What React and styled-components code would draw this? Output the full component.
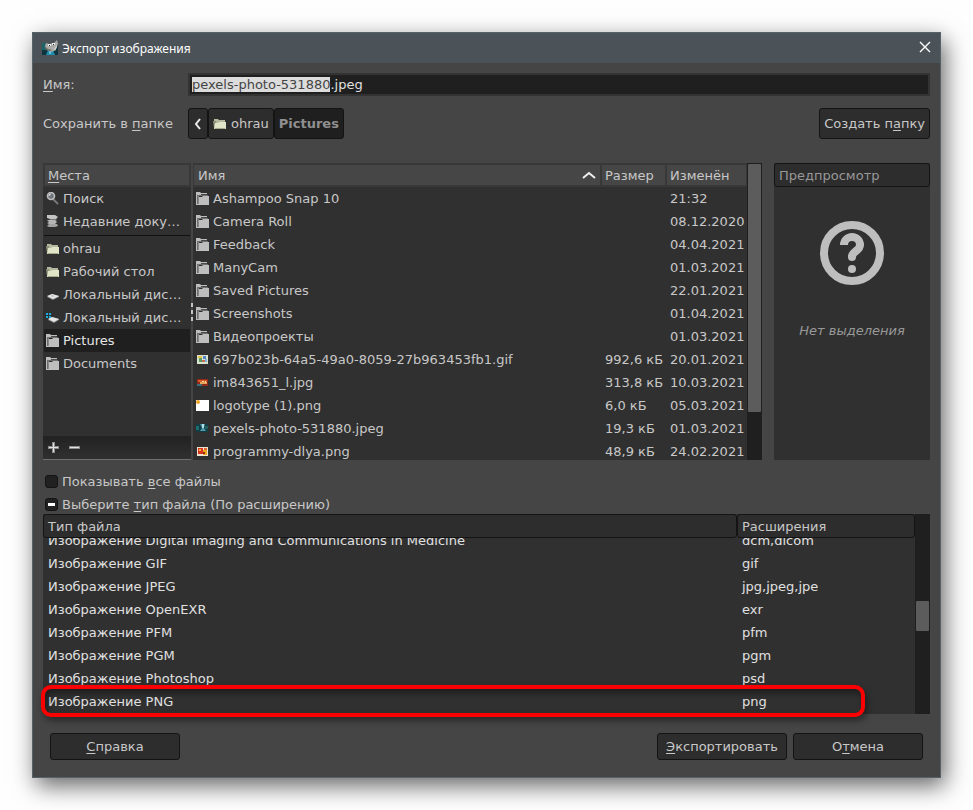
import React, { useEffect, useRef } from "react";
import styled, { createGlobalStyle } from "styled-components";

const places = [
  { icon: "search", name: "Поиск" },
  { icon: "recent", name: "Недавние доку…", line: true },
  { icon: "home", name: "ohrau" },
  { icon: "home", name: "Рабочий стол" },
  { icon: "disk", name: "Локальный дис…" },
  { icon: "system", name: "Локальный дис…" },
  { icon: "folder", name: "Pictures", active: true },
  { icon: "folder", name: "Documents" },
];

const files = [
  { icon: "folder", name: "Ashampoo Snap 10", size: "", date: "21:32" },
  { icon: "folder", name: "Camera Roll", size: "", date: "08.12.2020" },
  { icon: "folder", name: "Feedback", size: "", date: "04.04.2021" },
  { icon: "folder", name: "ManyCam", size: "", date: "01.03.2021" },
  { icon: "folder", name: "Saved Pictures", size: "", date: "22.01.2021" },
  { icon: "folder", name: "Screenshots", size: "", date: "01.04.2021" },
  { icon: "folder", name: "Видеопроекты", size: "", date: "01.03.2021" },
  { icon: "gif", name: "697b023b-64a5-49a0-8059-27b963453fb1.gif", size: "992,6 кБ", date: "20.01.2021" },
  { icon: "jpg", name: "im843651_l.jpg", size: "313,8 кБ", date: "10.03.2021" },
  { icon: "logo", name: "logotype (1).png", size: "6,0 кБ", date: "05.03.2021" },
  { icon: "pexels", name: "pexels-photo-531880.jpeg", size: "19,3 кБ", date: "01.03.2021" },
  { icon: "prog", name: "programmy-dlya.png", size: "48,9 кБ", date: "24.02.2021" },
];

const types = [
  ["Изображение Digital Imaging and Communications in Medicine", "dcm,dicom"],
  ["Изображение GIF", "gif"],
  ["Изображение JPEG", "jpg,jpeg,jpe"],
  ["Изображение OpenEXR", "exr"],
  ["Изображение PFM", "pfm"],
  ["Изображение PGM", "pgm"],
  ["Изображение Photoshop", "psd"],
  ["Изображение PNG", "png"],
];

const drawings = {
  folder: (
    <>
      <path d="M0 0h4l1 1h6v1H5v1H1v10H0z" fill="#bdbdbd" />
      <path d="M0 3h1v10H0z" fill="#bdbdbd" />
      <path d="M1 3h11v1H2v8H1z" fill="#6e6e6e" />
      <path d="M5 2h6v1H5z" fill="#4a4a4a" />
      <path d="M2 4h1v8H2z" fill="#8a8a8a" />
      <path d="M3 5h3l1-1h6v9H1v-1h2z" fill="#bebebe" />
    </>
  ),
  home: (
    <>
      <path d="M1 2h4l1 1h6v8H1z" fill="#b4b89f" />
      <path d="M0 4h3v7H1z" fill="#8d9177" />
      <path d="M2 6h3l1-1h7v7H1z" fill="#e1e5c8" />
      <path d="M2 11h10v1H2z" fill="#a5a98d" />
    </>
  ),
  search: (
    <>
      <path d="M7 7l5 5" stroke="#777" strokeWidth="2" />
      <circle cx="5" cy="4" r="3.5" fill="#70767b" stroke="#bcbcbc" strokeWidth="1.6" />
      <path d="M3 4q0-2 2-2" stroke="#e8e8e8" fill="none" />
    </>
  ),
  recent: (
    <>
      <path d="M1 0h8l3 2-2 2H4L1 3z" fill="#c4c4c4" />
      <path d="M4 4h6l1 1-2 1H3z" fill="#777" />
      <path d="M1 5h8l2 2-2 2H3L1 8l2-1z" fill="#b4b4b4" />
      <path d="M3 9h8l1 2-3 1H3l-2-1z" fill="#a2a2a2" />
    </>
  ),
  disk: (
    <>
      <path d="M1 9l5-3 7 2v1l-6 3z" fill="#8b8b8b" />
      <path d="M1 8l5-2 7 2-6 3z" fill="#e9e9e9" />
      <path d="M4 8l2-1 3 1-2 1z" fill="#c2c2c2" />
    </>
  ),
  system: (
    <>
      <path d="M2 9l4-3 7 2v1l-5 3z" fill="#888" />
      <path d="M2 8l4-2 7 2-5 3z" fill="#e6e6e6" />
      <path d="M0 2h2v2H0zM3 2h2v2H3zM0 5h2v2H0zM3 5h2v2H3z" fill="#18aee0" />
    </>
  ),
  gif: (
    <>
      <path d="M1 2h11v9H1z" fill="#d9e2cf" />
      <path d="M2 3h4v2H2z" fill="#e5c34b" />
      <path d="M3 5h3v4H3z" fill="#5e9b62" />
      <path d="M7 3h3v3H7z" fill="#5a83c4" />
      <path d="M6 7h3v2H6z" fill="#c86a52" />
      <path d="M9 6h2v3H9z" fill="#7fb2d8" />
    </>
  ),
  jpg: (
    <>
      <path d="M1 3h11v7H1z" fill="#8e2a17" />
      <path d="M2 4h9v2H2z" fill="#db5a28" />
      <path d="M4 6h7v2H4z" fill="#e9a45b" />
      <path d="M1 8h5v2H1z" fill="#3a7178" />
      <path d="M6 5h2v1H6zM9 5h1v2H9z" fill="#f4dca4" />
    </>
  ),
  logo: (
    <>
      <path d="M0 1h13v11H0z" fill="#fff" />
      <circle cx="2" cy="3" r="2" fill="#f3a52c" />
    </>
  ),
  pexels: (
    <>
      <path d="M0 2h12v8H0z" fill="#123d45" />
      <path d="M0 4h3v4H0z" fill="#1d6d70" />
      <path d="M4 2h5L8 6l2 3H4l2-3z" fill="#4e97a8" />
      <path d="M6 2h2v4H6z" fill="#b3dbe2" />
      <path d="M9 4h3v3H9z" fill="#235f5c" />
    </>
  ),
  prog: (
    <>
      <path d="M1 2h11v9H1z" fill="#ece3d2" />
      <path d="M2 3h5v6H2z" fill="#d8331f" />
      <path d="M3 4h2v2H3z" fill="#f6b63c" />
      <path d="M7 5h4v5H7z" fill="#efa51f" />
      <path d="M8 3h3v2H8z" fill="#e0662c" />
      <path d="M7 7h2v2H7z" fill="#8f2d18" />
    </>
  ),
};

function Icon({ name }) {
  return (
    <IconSvg viewBox="0 0 13 13" aria-hidden="true">
      {drawings[name]}
    </IconSvg>
  );
}

function AppIcon() {
  return (
    <AppSvg viewBox="0 0 16 16" aria-hidden="true">
      <path d="M0 4h16v11H0z" fill="#10343d" />
      <path d="M0 3h5v7H0z" fill="#1b6468" />
      <path d="M6 10h5l2 5H4z" fill="#1f8dac" />
      <path d="M7 11h2v3H7z" fill="#62bfd6" />
      <path d="M4 3l3 1 5-1 3-3 1 4-2 5-2 2-3 1-4-2-2-4z" fill="#a9a9a5" />
      <path d="M2 6l4 3 4 1-2 1-4-1z" fill="#696964" />
      <path d="M6 4h3v2H6zM10 3h3v2h-3z" fill="#ececea" />
      <path d="M7 5h1v1H7zM11 4h1v1h-1z" fill="#222" />
      <path d="M12 9l3-4v2l-2 4z" fill="#d4d4d1" />
    </AppSvg>
  );
}

function App() {
  const nameInput = useRef(null);
  const partial = useRef(null);

  useEffect(() => {
    const input = nameInput.current;
    input.focus();
    // select the name without its extension
    input.setSelectionRange(0, input.value.lastIndexOf("."));
    partial.current.indeterminate = true;
  }, []);

  return (
    <>
      <GlobalStyle />
      <Dialog>
        <TitleBar>
          <AppIcon />
          <Title>Экспорт изображения</Title>
          <CloseButton aria-label="Закрыть">
            <svg width="12" height="12" viewBox="0 0 12 12">
              <path d="M1 1l10 10M11 1L1 11" stroke="#fff" strokeWidth="1.4" />
            </svg>
          </CloseButton>
        </TitleBar>

        <Content>
          <NameRow>
            <label htmlFor="name"><u>И</u>мя:</label>
            <NameInput id="name" ref={nameInput} defaultValue="pexels-photo-531880.jpeg" />
          </NameRow>

          <FolderRow>
            <span>Сохранить в <u>п</u>апке</span>
            <Crumbs>
              <Crumb aria-label="Назад">
                <svg width="10" height="12" viewBox="0 0 10 12">
                  <path d="M7 1L3 6l4 5" fill="none" stroke="#eee" strokeWidth="2" />
                </svg>
              </Crumb>
              <Crumb><Icon name="home" /><CrumbText>ohrau</CrumbText></Crumb>
              <Crumb $current>Pictures</Crumb>
            </Crumbs>
            <Crumb>Создать п<u>а</u>пку</Crumb>
          </FolderRow>

          <Browser>
            <Places>
              <PlacesHeader><u>М</u>еста</PlacesHeader>
              <PlacesList>
                {places.map((place, index) => (
                  <PlaceItem key={index} $line={place.line}>
                    <PlaceButton $active={place.active}>
                      <Icon name={place.icon} />
                      {place.name}
                    </PlaceButton>
                  </PlaceItem>
                ))}
              </PlacesList>
              <PlacesTools>
                <ToolButton aria-label="Добавить">
                  <svg width="11" height="11" viewBox="0 0 11 11">
                    <path d="M4 0h3v4h4v3H7v4H4V7H0V4h4z" fill="#8c8c8c" />
                    <path d="M5 1h1v4h4v1H6v4H5V6H1V5h4z" fill="#e2e2e2" />
                  </svg>
                </ToolButton>
                <ToolButton aria-label="Удалить">
                  <svg width="11" height="11" viewBox="0 0 11 11">
                    <path d="M0 4h11v3H0z" fill="#8c8c8c" />
                    <path d="M1 5h9v1H1z" fill="#e2e2e2" />
                  </svg>
                </ToolButton>
              </PlacesTools>
            </Places>

            <Splitter><Grip /></Splitter>

            <FileArea>
              <FileTable>
                <colgroup>
                  <col />
                  <SizeCol />
                  <DateCol />
                </colgroup>
                <thead>
                  <tr>
                    <FileHead>
                      <SortHead>
                        Имя
                        <svg width="14" height="8" viewBox="0 0 14 8">
                          <path d="M1 7l6-5 6 5" fill="none" stroke="#eee" strokeWidth="2" />
                        </svg>
                      </SortHead>
                    </FileHead>
                    <FileHead>Размер</FileHead>
                    <FileHead>Изменён</FileHead>
                  </tr>
                </thead>
                <tbody>
                  {files.map((file) => (
                    <tr key={file.name}>
                      <FileCell>
                        <FileName><Icon name={file.icon} />{file.name}</FileName>
                      </FileCell>
                      <FileCell>{file.size}</FileCell>
                      <FileCell>{file.date}</FileCell>
                    </tr>
                  ))}
                </tbody>
              </FileTable>
              <ScrollBar>
                <FileThumb />
              </ScrollBar>
            </FileArea>

            <Preview>
              <PreviewHeader>Предпросмотр</PreviewHeader>
              <svg width="64" height="64" viewBox="0 0 64 64">
                <circle cx="32" cy="32" r="28" fill="none" stroke="#bebebe" strokeWidth="8" />
                <path
                  d="M24 24a8 8 0 0 1 16 0c0 6-8 6-8 12"
                  fill="none"
                  stroke="#bebebe"
                  strokeWidth="8"
                />
                <circle cx="32" cy="36" r="4" fill="#bebebe" />
                <circle cx="32" cy="48" r="4" fill="#bebebe" />
              </svg>
              <em>Нет выделения</em>
            </Preview>
          </Browser>

          <Options>
            <Option>
              <CheckBox type="checkbox" />
              <span>Показывать <u>в</u>се файлы</span>
            </Option>
            <Option>
              <CheckBox type="checkbox" ref={partial} />
              <span>Выберите <u>т</u>ип файла (По расширению)</span>
            </Option>
          </Options>

          <TypeArea>
            <TypeScroll>
              <TypeTable>
                <colgroup>
                  <col />
                  <ExtensionCol />
                </colgroup>
                <thead>
                  <tr>
                    <TypeHead>Тип файла</TypeHead>
                    <TypeHead>Расширения</TypeHead>
                  </tr>
                </thead>
                <tbody>
                  {types.map(([name, extension]) => (
                    <tr key={name}>
                      <TypeCell>{name}</TypeCell>
                      <TypeCell>{extension}</TypeCell>
                    </tr>
                  ))}
                </tbody>
              </TypeTable>
            </TypeScroll>
            <ScrollBar>
              <TypeThumb />
            </ScrollBar>
            <Marker />
          </TypeArea>

          <Footer>
            <FooterButton><u>С</u>правка</FooterButton>
            <Actions>
              <FooterButton><u>Э</u>кспортировать</FooterButton>
              <FooterButton>О<u>т</u>мена</FooterButton>
            </Actions>
          </Footer>
        </Content>
      </Dialog>
    </>
  );
}

const GlobalStyle = createGlobalStyle`
  * {
    box-sizing: border-box;
  }
  body {
    margin: 0;
    background: #fefefe;
    font-family: "DejaVu Sans", sans-serif;
    font-size: 13px;
    line-height: 15px;
    color: #c8c8c8;
  }
  button, input {
    font: inherit;
    color: inherit;
    margin: 0;
    outline: 0;
  }
  u {
    text-underline-offset: 2px;
    text-decoration-skip-ink: none;
  }
`;

const Dialog = styled.main`
  margin: 32px;
  border: 1px solid #566269;
  background: #454545;
  box-shadow: 4px 8px 22px rgba(0, 0, 0, 0.6);
`;

const TitleBar = styled.header`
  display: flex;
  align-items: center;
  height: 30px;
  padding: 0 9px;
  background: #4b5359;
`;

const Title = styled.h1`
  flex: 1;
  margin: 0 0 0 4px;
  font-family: "Noto Sans", sans-serif;
  font-size: 12px;
  font-weight: 400;
  color: #fff;
`;

const AppSvg = styled.svg`
  width: 16px;
  height: 16px;
`;

const IconSvg = styled.svg`
  flex: none;
  width: 13px;
  height: 13px;
`;

const CloseButton = styled.button`
  display: flex;
  padding: 0 0 2px;
  border: 0;
  background: none;
`;

const Content = styled.div`
  padding: 10px 10px 17px;
`;

const NameRow = styled.div`
  display: grid;
  grid-template-columns: 145px 1fr;
  align-items: center;
`;

const NameInput = styled.input`
  width: 100%;
  height: 23px;
  padding: 0 2px;
  border: 2px solid #333;
  background: #1f1f1f;
  color: #e0e0e0;

  &::selection {
    background: #dcdcdc;
    color: #444;
  }
`;

const FolderRow = styled.div`
  display: grid;
  grid-template-columns: 145px 1fr auto;
  align-items: center;
  margin-top: 12px;
`;

const Crumbs = styled.div`
  display: flex;
`;

const Crumb = styled.button`
  display: flex;
  align-items: center;
  height: 31px;
  padding: 0 4px;
  border: 1px solid #141414;
  border-radius: 3px;
  white-space: pre;
  background: ${(props) => (props.$current ? "#1f1f1f" : "#2d2d2d")};
  color: ${(props) => (props.$current ? "#8f8f8f" : "#c8c8c8")};
  font-weight: ${(props) => (props.$current ? "700" : "400")};
`;

const CrumbText = styled.span`
  margin-left: 5px;
`;

const Browser = styled.div`
  display: flex;
  height: 297px;
  margin-top: 24px;
`;

const Places = styled.nav`
  display: flex;
  flex-direction: column;
  width: 148px;
  background: #303030;
`;

const PlacesHeader = styled.div`
  height: 24px;
  padding: 3px;
  border: 2px solid #383838;
  background: #464646;
`;

const PlacesList = styled.ul`
  flex: 1;
  margin: 0;
  padding: 0 1px;
  list-style: none;
`;

const PlaceItem = styled.li`
  padding-bottom: ${(props) => (props.$line ? "2px" : "0")};
  margin-bottom: ${(props) => (props.$line ? "1px" : "0")};
  border-bottom: ${(props) => (props.$line ? "1px solid #111" : "0")};
`;

const PlaceButton = styled.button`
  display: flex;
  align-items: center;
  gap: 4px;
  width: 100%;
  height: 23px;
  padding: 0 2px;
  border: 0;
  text-align: left;
  white-space: nowrap;
  background: ${(props) => (props.$active ? "#1f1f1f" : "transparent")};
  color: ${(props) => (props.$active ? "#e6e6e6" : "#c8c8c8")};
`;

const PlacesTools = styled.div`
  display: flex;
  align-items: center;
  gap: 10px;
  height: 24px;
  padding: 0 5px;
  border-bottom: 1px solid #707070;
  background: linear-gradient(#222, #303030);
`;

const ToolButton = styled.button`
  display: flex;
  padding: 0;
  border: 0;
  background: none;
`;

const Splitter = styled.div`
  display: flex;
  align-items: center;
  width: 2px;
`;

const Grip = styled.div`
  width: 2px;
  height: 18px;
  background: repeating-linear-gradient(#c4c4c4 0 4px, #454545 4px 7px);
`;

const FileArea = styled.section`
  display: flex;
  flex: 1;
  overflow: hidden;
  background: #303030;
`;

const FileTable = styled.table`
  flex: 1;
  align-self: flex-start;
  table-layout: fixed;
  border-spacing: 0;
`;

const SizeCol = styled.col`
  width: 65px;
`;

const DateCol = styled.col`
  width: 81px;
`;

const FileHead = styled.th`
  height: 24px;
  padding: 0 0 0 3px;
  border: solid #383838;
  border-width: 2px 1px;
  background: #464646;
  font-weight: 400;
  text-align: left;
`;

const SortHead = styled.div`
  display: flex;
  align-items: center;
  justify-content: space-between;
  padding: 0 4px 0 1px;
`;

const FileCell = styled.td`
  height: 23px;
  padding: 0 0 0 4px;
  white-space: nowrap;
`;

const FileName = styled.div`
  display: flex;
  align-items: center;
  gap: 4px;
  margin-left: -1px;
`;

const ScrollBar = styled.div`
  display: flex;
  flex-direction: column;
  width: 15px;
  padding: 1px;
  background: #1f1f1f;
`;

const Thumb = styled.div`
  border-radius: 1px;
  background: #5c5c5c;
`;

const FileThumb = styled(Thumb)`
  height: 84%;
`;

const TypeThumb = styled(Thumb)`
  height: 30px;
  margin-top: 86px;
`;

const Preview = styled.aside`
  display: flex;
  flex-direction: column;
  align-items: center;
  width: 156px;
  margin-left: 12px;
  background: #303030;
  color: #989898;

  svg {
    margin: 34px 0 38px;
  }
`;

const PreviewHeader = styled.div`
  align-self: stretch;
  height: 24px;
  padding: 4px;
  border: 1px solid #141414;
  border-radius: 3px;
  background: #2d2d2d;
`;

const Options = styled.div`
  padding: 10px 2px 0;
`;

const Option = styled.label`
  display: flex;
  align-items: center;
  gap: 4px;
  height: 23px;
`;

const CheckBox = styled.input`
  appearance: none;
  display: grid;
  place-items: center;
  width: 13px;
  height: 13px;
  border: 1px solid #141414;
  border-radius: 3px;
  background: #212121;

  &:indeterminate::before {
    content: "";
    width: 7px;
    height: 3px;
    background: #fff;
  }
`;

const TypeArea = styled.section`
  position: relative;
  display: flex;
  height: 200px;
  margin-top: -2px;
  background: #303030;
`;

const TypeScroll = styled.div`
  display: flex;
  flex: 1;
  flex-direction: column;
  justify-content: flex-end;
  overflow: hidden;
  padding-bottom: 1px;
`;

const TypeTable = styled.table`
  width: 100%;
  table-layout: fixed;
  border-spacing: 0;
  color: #e0e0e0;
`;

const ExtensionCol = styled.col`
  width: 178px;
`;

const TypeHead = styled.th`
  position: sticky;
  top: 0;
  height: 24px;
  padding: 0 0 0 4px;
  border: 1px solid #141414;
  border-radius: 3px;
  background: #2d2d2d;
  color: #c8c8c8;
  font-weight: 400;
  text-align: left;
`;

const TypeCell = styled.td`
  height: 23px;
  padding: 0 0 0 5px;
`;

const Marker = styled.div`
  position: absolute;
  left: -2px;
  right: 65px;
  bottom: -3px;
  height: 32px;
  border: 4px solid #fb0000;
  border-radius: 10px;
  box-shadow: 2px 4px 6px rgba(0, 0, 0, 0.4), inset 2px 4px 6px rgba(0, 0, 0, 0.4);
`;

const Footer = styled.footer`
  display: flex;
  justify-content: space-between;
  margin-top: 19px;
  padding: 0 7px;
`;

const Actions = styled.div`
  display: flex;
  gap: 6px;
`;

const FooterButton = styled.button`
  width: 130px;
  height: 27px;
  padding: 0;
  border: 1px solid #141414;
  border-radius: 3px;
  background: #2d2d2d;
`;

export default App;
